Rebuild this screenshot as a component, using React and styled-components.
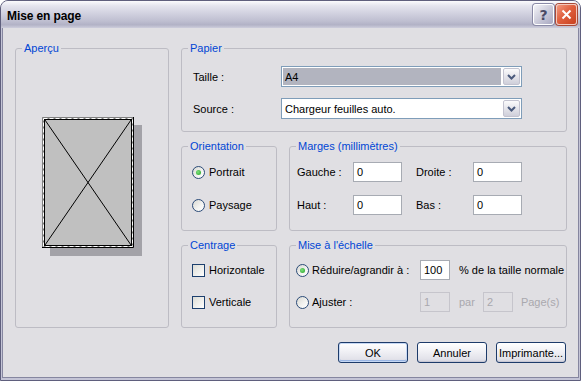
import React from 'react';
import styled, { createGlobalStyle } from 'styled-components';

const GlobalStyle = createGlobalStyle`
  html, body { margin: 0; padding: 0; background: #ffffff; }
  body { font-family: "Liberation Sans", Arial, sans-serif; font-size: 11px; color: #000; }
`;

const Window = styled.div`
  width: 581px;
  height: 381px;
  box-sizing: border-box;
  border: 1px solid #5f5f7d;
  border-radius: 8px 8px 0 0;
  overflow: hidden;
  background: #c4c4d6;
  display: flex;
  flex-direction: column;
`;

const TitleBar = styled.div`
  height: 27px;
  flex: none;
  display: flex;
  align-items: center;
  padding: 0 3px 0 6px;
  background: linear-gradient(#fbfbfd 0%, #e4e4ee 18%, #d2d2e0 45%, #bebed0 75%, #b2b2c6 88%, #cdcddc 100%);
`;

const TitleText = styled.div`
  flex: 1;
  font-family: "Liberation Sans", Arial, sans-serif;
  font-weight: bold;
  font-size: 12px;
  letter-spacing: -0.1px;
  color: #000;
  padding-top: 2px;
`;

const CaptionButton = styled.div`
  width: 21px;
  height: 21px;
  box-sizing: border-box;
  margin-left: 2px;
  border-radius: 3px;
  border: 1px solid ${(props) => (props.close ? '#f4c8bc' : '#ffffff')};
  box-shadow: 0 0 0 1px ${(props) => (props.close ? '#a84a38' : '#8a8aa6')};
  background: ${(props) => (props.close
    ? 'linear-gradient(135deg, #f29a80 0%, #e0603f 45%, #c8411f 100%)'
    : 'linear-gradient(135deg, #f4f4f8 0%, #c8c8d8 55%, #a9a9c2 100%)')};
  display: flex;
  align-items: center;
  justify-content: center;
  font-family: "DejaVu Sans", sans-serif;
  font-weight: bold;
  font-size: 14px;
  color: #4a4a66;
`;

const Body = styled.div`
  flex: 1;
  margin: 0 1px 2px 1px;
  border: 1px solid #8686a0;
  border-top: none;
  background: #e0dfe3;
  padding: 14px 11px 0 12px;
  display: flex;
  flex-direction: column;
`;

const Main = styled.div`
  display: flex;
  gap: 12px;
`;

const RightColumn = styled.div`
  width: 386px;
  display: flex;
  flex-direction: column;
`;

const Row = styled.div`
  display: flex;
  gap: 12px;
  margin-top: ${(props) => props.top || 0}px;
`;

const Group = styled.fieldset`
  margin: 0;
  padding: 0 0 0 6px;
  min-width: 0;
  box-sizing: border-box;
  border: 1px solid #bdbcc4;
  border-radius: 3px;
  width: ${(props) => (props.width ? `${props.width}px` : 'auto')};
  flex: ${(props) => (props.width ? 'none' : '1')};
  display: flex;
  flex-direction: column;
`;

const Legend = styled.legend`
  padding: 0 2px;
  line-height: 13px;
  color: #0046d5;
  font-size: 11px;
`;

const PreviewArea = styled.div`
  flex: 1;
  display: flex;
  align-items: center;
  justify-content: center;
  margin-left: -6px;
  padding: 0 1px 9px 0;
`;

const PaperGrid = styled.div`
  display: grid;
  grid-template-columns: 88px 241px;
  row-gap: 11px;
  padding: 11px 0 12px 5px;
  align-items: center;
`;

const Label = styled.span`
  white-space: nowrap;
  color: ${(props) => (props.disabled ? '#a9a8ae' : '#000')};
`;

const Combo = styled.div`
  height: 21px;
  box-sizing: border-box;
  border: 1px solid #7f9db9;
  background: #fff;
  display: flex;
`;

const ComboValue = styled.div`
  flex: 1;
  margin: 1px;
  padding-left: 2px;
  background: ${(props) => (props.selected ? '#b2b4bf' : '#ffffff')};
  display: flex;
  align-items: center;
`;

const ComboButton = styled.div`
  width: 17px;
  margin: 1px;
  box-sizing: border-box;
  border: 1px solid #c3c3d0;
  border-radius: 2px;
  background: linear-gradient(#fbfbfc, #dcdce4 70%, #cfcfda);
  display: flex;
  align-items: center;
  justify-content: center;
`;

const StackList = styled.div`
  display: flex;
  flex-direction: column;
  gap: ${(props) => props.gap}px;
  padding: ${(props) => props.pad};
`;

const OptionRow = styled.div`
  height: 20px;
  display: flex;
  align-items: center;
  gap: ${(props) => props.gap || 4}px;
`;

const Radio = styled.span`
  width: 13px;
  height: 13px;
  box-sizing: border-box;
  border-radius: 50%;
  border: 1px solid #2b4b78;
  background: linear-gradient(135deg, #d8d8d2 0%, #f4f4f2 60%, #ffffff 100%);
  display: flex;
  align-items: center;
  justify-content: center;
  flex: none;
  &::after {
    content: '';
    display: ${(props) => (props.checked ? 'block' : 'none')};
    width: 5px;
    height: 5px;
    border-radius: 50%;
    background: radial-gradient(circle at 40% 40%, #7ee07e, #21a121);
  }
`;

const Checkbox = styled.span`
  width: 13px;
  height: 13px;
  box-sizing: border-box;
  border: 1px solid #1c3f6e;
  background: linear-gradient(135deg, #dcdcd6 0%, #f4f4f2 70%, #ffffff 100%);
  flex: none;
`;

const MarginGrid = styled.div`
  display: grid;
  grid-template-columns: 56px 49px 71px 49px;
  row-gap: 13px;
  padding: 9px 0 15px 1px;
  align-items: center;
  & > :nth-child(4n + 3) { margin-left: 14px; }
`;

const TextBox = styled.div`
  height: 20px;
  width: ${(props) => props.width || 49}px;
  box-sizing: border-box;
  border: 1px solid ${(props) => (props.disabled ? '#c6c5cc' : '#a7abb3')};
  background: ${(props) => (props.disabled ? '#e0dfe3' : '#ffffff')};
  color: ${(props) => (props.disabled ? '#a9a8ae' : '#000')};
  padding-left: 3px;
  display: flex;
  align-items: center;
`;

const ScaleGrid = styled.div`
  display: grid;
  grid-template-columns: 124px 30px auto;
  row-gap: 12px;
  padding: 8px 0 15px 0;
  align-items: center;
`;

const Inline = styled.div`
  display: flex;
  align-items: center;
  gap: ${(props) => props.gap || 0}px;
  padding-left: ${(props) => props.pad || 0}px;
`;

const ButtonBar = styled.div`
  display: flex;
  justify-content: flex-end;
  gap: 9px;
  margin-top: 14px;
  padding-right: 1px;
`;

const Button = styled.button`
  width: 70px;
  height: 21px;
  box-sizing: border-box;
  padding: 0;
  border: 1px solid #1d3b6a;
  border-radius: 3px;
  background: linear-gradient(#ffffff 0%, #f2f2f6 40%, #e2e2ea 85%, #d2d2dc 100%);
  box-shadow: ${(props) => (props.primary
    ? 'inset 0 0 0 1px #c6d8f4, inset 0 -1px 0 1px #9ab6e4'
    : 'inset 0 -1px 0 0 #c8c8d4')};
  font-family: "Liberation Sans", Arial, sans-serif;
  font-size: 11px;
  color: #000;
`;

function Chevron() {
  return (
    <svg width="9" height="6" viewBox="0 0 9 6">
      <path d="M1 1 L4.5 4.5 L8 1" fill="none" stroke="#4a5a7c" strokeWidth="2" />
    </svg>
  );
}

function PagePreview() {
  return (
    <svg width="100" height="139" viewBox="0 0 100 139">
      <rect x="8" y="8" width="92" height="131" fill="#a3a2a8" />
      <rect x="0" y="0" width="92" height="131" fill="#c0c0c0" />
      <path d="M0.5 131 V0.5 H92" fill="none" stroke="#808080" />
      <path d="M91.5 0 V130.5 H0" fill="none" stroke="#000" />
      <rect x="1.5" y="1.5" width="89" height="128" fill="none" stroke="#808080" />
      <rect x="1.5" y="1.5" width="89" height="128" fill="none" stroke="#ffffff" strokeDasharray="4 2" />
      <rect x="2.5" y="2.5" width="87" height="126" fill="none" stroke="#000" />
      <line x1="3" y1="3" x2="89" y2="128" stroke="#000" strokeWidth="1" />
      <line x1="89" y1="3" x2="3" y2="128" stroke="#000" strokeWidth="1" />
    </svg>
  );
}

export default function App() {
  return (
    <>
      <GlobalStyle />
      <Window>
        <TitleBar>
          <TitleText>Mise en page</TitleText>
          <CaptionButton>?</CaptionButton>
          <CaptionButton close>
            <svg width="11" height="11" viewBox="0 0 11 11">
              <path d="M1.5 1.5 L9.5 9.5 M9.5 1.5 L1.5 9.5" stroke="#fff" strokeWidth="2" />
            </svg>
          </CaptionButton>
        </TitleBar>
        <Body>
          <Main>
            <Group width={154}>
              <Legend>Aperçu</Legend>
              <PreviewArea>
                <PagePreview />
              </PreviewArea>
            </Group>
            <RightColumn>
              <Group>
                <Legend>Papier</Legend>
                <PaperGrid>
                  <Label>Taille :</Label>
                  <Combo>
                    <ComboValue selected>A4</ComboValue>
                    <ComboButton><Chevron /></ComboButton>
                  </Combo>
                  <Label>Source :</Label>
                  <Combo>
                    <ComboValue>Chargeur feuilles auto.</ComboValue>
                    <ComboButton><Chevron /></ComboButton>
                  </Combo>
                </PaperGrid>
              </Group>
              <Row top={8}>
                <Group width={96}>
                  <Legend>Orientation</Legend>
                  <StackList gap={13} pad="9px 0 15px 4px">
                    <OptionRow><Radio checked /><Label>Portrait</Label></OptionRow>
                    <OptionRow><Radio /><Label>Paysage</Label></OptionRow>
                  </StackList>
                </Group>
                <Group>
                  <Legend>Marges (millimètres)</Legend>
                  <MarginGrid>
                    <Label>Gauche :</Label>
                    <TextBox>0</TextBox>
                    <Label>Droite :</Label>
                    <TextBox>0</TextBox>
                    <Label>Haut :</Label>
                    <TextBox>0</TextBox>
                    <Label>Bas :</Label>
                    <TextBox>0</TextBox>
                  </MarginGrid>
                </Group>
              </Row>
              <Row top={8}>
                <Group width={96}>
                  <Legend>Centrage</Legend>
                  <StackList gap={12} pad="8px 0 15px 4px">
                    <OptionRow><Checkbox /><Label>Horizontale</Label></OptionRow>
                    <OptionRow><Checkbox /><Label>Verticale</Label></OptionRow>
                  </StackList>
                </Group>
                <Group>
                  <Legend>Mise à l'échelle</Legend>
                  <ScaleGrid>
                    <OptionRow gap={3}><Radio checked /><Label>Réduire/agrandir à :</Label></OptionRow>
                    <TextBox width={30}>100</TextBox>
                    <Inline pad={9}><Label>% de la taille normale</Label></Inline>
                    <OptionRow gap={3}><Radio /><Label>Ajuster :</Label></OptionRow>
                    <TextBox width={30} disabled>1</TextBox>
                    <Inline pad={9} gap={8}>
                      <Label disabled>par</Label>
                      <TextBox width={30} disabled>2</TextBox>
                      <Label disabled>Page(s)</Label>
                    </Inline>
                  </ScaleGrid>
                </Group>
              </Row>
            </RightColumn>
          </Main>
          <ButtonBar>
            <Button primary>OK</Button>
            <Button>Annuler</Button>
            <Button>Imprimante...</Button>
          </ButtonBar>
        </Body>
      </Window>
    </>
  );
}
